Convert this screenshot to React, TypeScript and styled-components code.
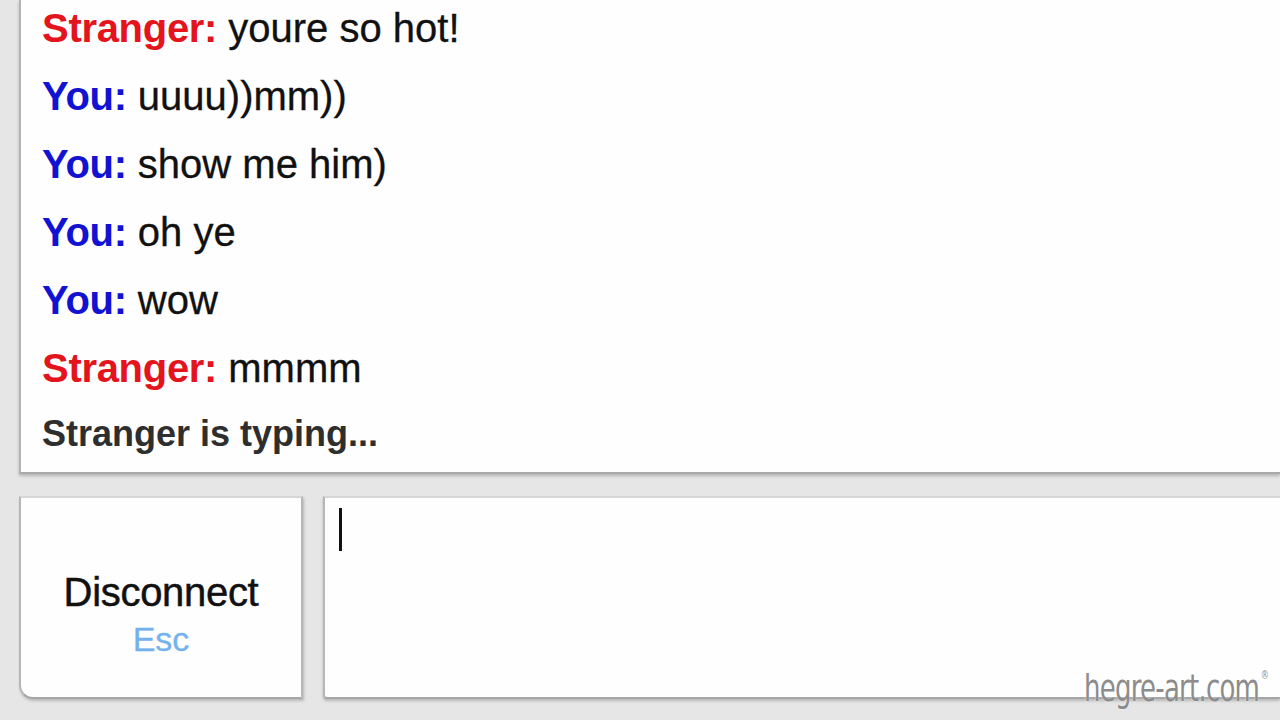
import React from "react";
import styled, { createGlobalStyle } from "styled-components";

interface ChatLine {
  from: "stranger" | "you";
  text: string;
}

const lines: ChatLine[] = [
  { from: "stranger", text: "youre so hot!" },
  { from: "you", text: "uuuu))mm))" },
  { from: "you", text: "show me him)" },
  { from: "you", text: "oh ye" },
  { from: "you", text: "wow" },
  { from: "stranger", text: "mmmm" },
];

const App: React.FC = () => {
  return (
    <>
      <GlobalStyle />
      <Page>
        <LogBox>
          {lines.map((line, i) => (
            <Message key={i}>
              <Source from={line.from}>
                {line.from === "stranger" ? "Stranger:" : "You:"}
              </Source>{" "}
              {line.text}
            </Message>
          ))}
          <Status>Stranger is typing...</Status>
        </LogBox>

        <Controls>
          <DisconnectButton>
            <BtnLabel>Disconnect</BtnLabel>
            <Shortcut>Esc</Shortcut>
          </DisconnectButton>
          <InputBox>
            <Caret />
          </InputBox>
        </Controls>

        <Watermark>
          hegre-art.com<sup>®</sup>
        </Watermark>
      </Page>
    </>
  );
};

export default App;

const GlobalStyle = createGlobalStyle`
  html, body {
    margin: 0;
    padding: 0;
    background: #e6e6e6;
  }
  * {
    box-sizing: border-box;
  }
`;

const Page = styled.div`
  position: relative;
  width: 1280px;
  height: 720px;
  overflow: hidden;
  padding-left: 19px;
  display: flex;
  flex-direction: column;
  gap: 22px;
  background: #e6e6e6;
  font-family: "Liberation Sans", Arial, sans-serif;
`;

const LogBox = styled.div`
  height: 474px;
  display: flex;
  flex-direction: column;
  justify-content: flex-end;
  overflow: hidden;
  background: #fefefe;
  border-left: 2px solid #b4b4b4;
  border-bottom: 2px solid #a9a9a9;
  box-shadow: 0 2px 3px rgba(0, 0, 0, 0.22);
  padding: 0 0 17px 21px;
`;

const Message = styled.p`
  margin: 0;
  font-size: 40px;
  line-height: 68px;
  color: #111;
  white-space: nowrap;
  -webkit-text-stroke: 0.3px #111;
`;

const Source = styled.strong<{ from: "stranger" | "you" }>`
  font-weight: bold;
  letter-spacing: -0.3px;
  color: ${(p) => (p.from === "stranger" ? "#e3141c" : "#1212d2")};
  -webkit-text-stroke: 0;
`;

const Status = styled.p`
  margin: 10px 0 0;
  font-size: 36px;
  font-weight: bold;
  line-height: 43px;
  color: #2e2e2e;
`;

const Controls = styled.div`
  display: flex;
  gap: 20px;
  height: 203px;
`;

const DisconnectButton = styled.div`
  width: 284px;
  flex-shrink: 0;
  display: flex;
  flex-direction: column;
  align-items: center;
  padding-top: 74px;
  background: #fefefe;
  border: 2px solid #b6b6b6;
  border-top-color: #d6d6d6;
  border-bottom-color: #a6a6a6;
  border-radius: 0 0 0 14px;
  box-shadow: 1px 2px 3px rgba(0, 0, 0, 0.2);
`;

const BtnLabel = styled.div`
  font-size: 40px;
  line-height: 40px;
  color: #111;
  letter-spacing: -0.3px;
  -webkit-text-stroke: 0.5px #111;
`;

const Shortcut = styled.div`
  margin-top: 10px;
  font-size: 34px;
  line-height: 34px;
  color: #74b2ee;
  -webkit-text-stroke: 0.3px #74b2ee;
`;

const InputBox = styled.div`
  flex: 1;
  padding: 10px 0 0 14px;
  background: #fefefe;
  border: 2px solid #b6b6b6;
  border-right: none;
  border-top-color: #d6d6d6;
  border-bottom-color: #a6a6a6;
  border-radius: 0 0 0 4px;
  box-shadow: 0 2px 3px rgba(0, 0, 0, 0.2);
`;

const Caret = styled.div`
  width: 3px;
  height: 43px;
  background: #111;
`;

const Watermark = styled.div`
  position: absolute;
  right: 12px;
  bottom: 13px;
  font-family: "DejaVu Sans Condensed", "DejaVu Sans", sans-serif;
  font-size: 38px;
  line-height: 1;
  color: #8c8c8c;
  letter-spacing: -1px;
  transform: scaleX(0.76);
  transform-origin: right bottom;
  text-shadow: 0 0 2px rgba(255, 255, 255, 0.8);

  sup {
    font-size: 12px;
    vertical-align: top;
    margin-left: 2px;
  }
`;
